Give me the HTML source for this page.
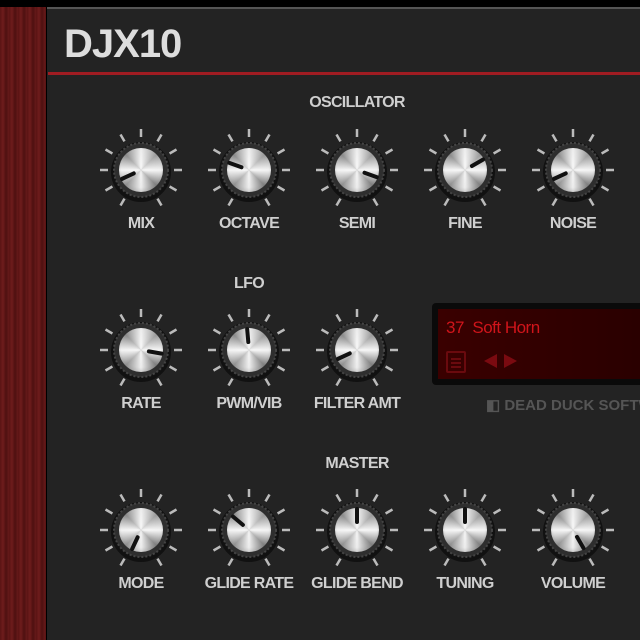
<!DOCTYPE html><html><head><style>
html,body{margin:0;width:640px;height:640px;overflow:hidden}
body{position:relative;background:#000;font-family:"Liberation Sans",sans-serif}
#wrap{position:absolute;left:0;top:0;width:640px;height:640px;overflow:hidden}
.wood{position:absolute;left:0;top:7px;width:46px;height:633px;background:repeating-linear-gradient(90deg,#5a1414 0,#6e1c1c 3px,#4e1010 6px,#661a1a 9px);}
.panel{position:absolute;left:47px;top:7px;width:593px;height:633px;background:#232323;border-top:2px solid #555;box-sizing:border-box}
.t{position:absolute;color:#cfcfcf;font-weight:bold;font-size:16px;letter-spacing:-0.7px;transform:translateX(-50%);white-space:nowrap}
.k{position:absolute;width:44px;height:44px;border-radius:50%;background:radial-gradient(circle at 50% 45%,rgba(255,255,255,.7) 0,rgba(255,255,255,0) 60%,rgba(0,0,0,.35) 100%),conic-gradient(#eee,#999,#f4f4f4,#888,#eee,#999,#f4f4f4,#888,#eee)}
</style></head><body><div id="wrap">
<div class="wood"></div><div class="panel"></div>
<div style="position:absolute;left:48px;top:72px;width:592px;height:3px;background:#a01c22"></div>
<div style="position:absolute;left:64px;top:22px;color:#ddd;font-weight:bold;font-size:40px;letter-spacing:-1px">DJX10</div>
<div style="position:absolute;left:432px;top:303px;width:208px;height:82px;background:#0a0a0a;border-radius:4px 0 0 4px"></div>
<div style="position:absolute;left:438px;top:309px;width:202px;height:70px;background:linear-gradient(90deg,#3a0000,#2a0000)"></div>
<div style="position:absolute;left:446px;top:318px;color:#d0141a;font-size:17px;letter-spacing:-0.5px">37&nbsp; Soft Horn</div>
<div style="position:absolute;left:446px;top:351px;width:20px;height:22px;border:2px solid #6a0a0e;box-sizing:border-box;border-radius:2px;background:linear-gradient(#6a0a0e,#6a0a0e) 3px 5px/10px 2px no-repeat,linear-gradient(#6a0a0e,#6a0a0e) 3px 9px/10px 2px no-repeat,linear-gradient(#6a0a0e,#6a0a0e) 3px 13px/10px 2px no-repeat"></div>
<svg width="40" height="20" style="position:absolute;left:482px;top:352px"><polygon points="2,9 15,2 15,16" fill="#7a0a10"/><polygon points="22,2 35,9 22,16" fill="#7a0a10"/></svg>
<div style="position:absolute;left:486px;top:396px;width:154px;overflow:hidden;color:#555;font-weight:bold;font-size:15px;white-space:nowrap">◧ DEAD DUCK SOFTWARE</div>
<svg width="640" height="640" style="position:absolute;left:0;top:0" id="s"></svg>
</div>
<script>
var s=document.getElementById('s'),w=document.getElementById('wrap'),h='',kn='';
var xs=[141,249,357,465,573];
var rows=[[170,[-115,-70,110,60,-115],['MIX','OCTAVE','SEMI','FINE','NOISE']],[350,[100,-5,-115],['RATE','PWM/VIB','FILTER AMT']],[530,[-155,-50,0,0,150],['MODE','GLIDE RATE','GLIDE BEND','TUNING','VOLUME']]];
var ind='';
rows.forEach(function(r){r[1].forEach(function(a,i){var x=xs[i],y=r[0];
for(var k=-150;k<=150;k+=30){var t=k*Math.PI/180;h+='<line x1="'+(x+33*Math.sin(t))+'" y1="'+(y-33*Math.cos(t))+'" x2="'+(x+41*Math.sin(t))+'" y2="'+(y-41*Math.cos(t))+'" stroke="#bbb" stroke-width="2.5"/>';}
h+='<circle cx="'+x+'" cy="'+(y+2)+'" r="30" fill="#111"/><circle cx="'+x+'" cy="'+y+'" r="27" fill="#2e2e2e" stroke="#444" stroke-dasharray="2 2" stroke-width="2"/>';
kn+='<div class="k" style="left:'+(x-22)+'px;top:'+(y-22)+'px"></div>';
var t=a*Math.PI/180;ind+='<line x1="'+(x+8*Math.sin(t))+'" y1="'+(y-8*Math.cos(t))+'" x2="'+(x+21*Math.sin(t))+'" y2="'+(y-21*Math.cos(t))+'" stroke="#111" stroke-width="4" stroke-linecap="round"/>';
});});
s.innerHTML=h;
var lab=kn+'<svg width="640" height="640" style="position:absolute;left:0;top:0">'+ind+'</svg>';
rows.forEach(function(r){r[2].forEach(function(n,i){lab+='<div class="t" style="left:'+xs[i]+'px;top:'+(r[0]+45)+'px">'+n+'</div>';});});
lab+='<div class="t" style="left:357px;top:94px">OSCILLATOR</div><div class="t" style="left:249px;top:275px">LFO</div><div class="t" style="left:357px;top:455px">MASTER</div>';
w.insertAdjacentHTML('beforeend',lab);
</script>
</body></html>
